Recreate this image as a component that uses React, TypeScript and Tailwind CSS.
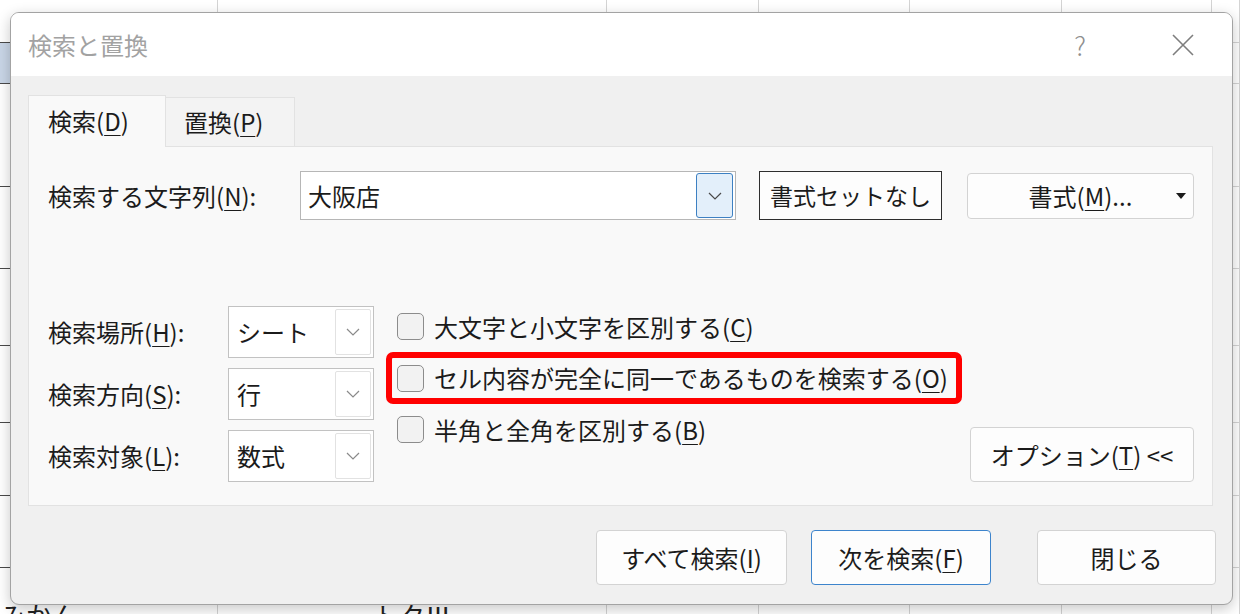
import React from "react";

const Key = ({ c }: { c: string }) => (
  <span className="underline decoration-1 underline-offset-[4px]">{c}</span>
);

const Chevron = ({ color = "#666" }: { color?: string }) => (
  <svg width="14" height="8" viewBox="0 0 14 8">
    <path d="M1 1l6 6 6-6" stroke={color} strokeWidth="1.2" fill="none" />
  </svg>
);

const sheetCols = [218, 389, 152, 151, 152, 150, 28];
const sheetRows = [43, 41, 103, 82, 77, 77, 73, 72, 80];

const Sheet = () => (
  <div className="flex flex-col w-[1240px] h-[614px] bg-white">
    {sheetRows.map((h, r) => (
      <div key={r} className="flex shrink-0" style={{ height: h }}>
        {sheetCols.map((w, c) => (
          <div
            key={c}
            style={{ width: w }}
            className={`shrink-0 border-r border-[#d4d4d4] ${
              c === 0 ? "border-b border-b-[#4a4a4a]" : "border-b border-b-[#d4d4d4]"
            } ${r === 1 && c === 0 ? "bg-[#c9d6e7]" : ""} ${
              r === 8 ? "pt-[34px] text-[26px] leading-none text-[#222]" : ""
            } ${r === 8 && c === 1 ? "text-center" : ""}`}
          >
            {r === 8 && c === 0 ? "みかん" : ""}
            {r === 8 && c === 1 ? "トクⅢ" : ""}
          </div>
        ))}
      </div>
    ))}
  </div>
);

const SelectBox = ({ value }: { value: string }) => (
  <div className="w-[146px] h-[52px] bg-white border border-[#c2c2c2] flex items-center pl-[8px] pr-[2px]">
    <span className="flex-1 text-[24px]">{value}</span>
    <div className="w-[36px] h-[46px] border border-[#e2e2e2] rounded-[2px] flex items-center justify-center">
      <Chevron color="#8a8a8a" />
    </div>
  </div>
);

const CheckRow = ({ children, marked }: { children: React.ReactNode; marked?: boolean }) => (
  <div
    className={`flex items-center border-[6px] rounded-[7px] pl-[5px] ${
      marked ? "h-[52px] w-[576px] border-[#ff0000]" : "h-[51px] border-transparent"
    }`}
  >
    <div className="w-[27px] h-[27px] rounded-[5px] border border-[#8c8c8c] bg-[#f2f2f2]" />
    <span className="ml-[10px] text-[24px]">{children}</span>
  </div>
);

const Button = ({
  children,
  className = "",
}: {
  children: React.ReactNode;
  className?: string;
}) => (
  <div
    className={`h-[55px] bg-[#fdfdfd] rounded-[4px] border flex items-center justify-center text-[24px] ${className}`}
  >
    {children}
  </div>
);

export default function App() {
  return (
    <div className="relative w-[1240px] h-[614px] overflow-hidden font-['Noto_Sans_CJK_JP','Noto_Sans',sans-serif] text-[#1b1b1b]">
      <Sheet />

      {/* dialog */}
      <div className="absolute left-[10px] top-[12px] w-[1223px] h-[593px] rounded-[9px] border border-[#a3a3a3] bg-[#f0f0f0] overflow-hidden shadow-[0_4px_14px_rgba(0,0,0,0.22)] flex flex-col">
        <div className="h-[63px] bg-white flex items-center pl-[17px] pr-[38px] shrink-0">
          <span className="text-[24px] text-[#a2a2a2]">検索と置換</span>
          <span className="ml-auto text-[26px] font-light text-[#8e8e8e] leading-none">?</span>
          <svg className="ml-[86px]" width="22" height="22" viewBox="0 0 22 22">
            <path d="M1 1l20 20M21 1L1 21" stroke="#7e7e7e" strokeWidth="1.6" />
          </svg>
        </div>

        <div className="flex-1 pl-[17px] pr-[16px] pt-[19px]">
          {/* tabs */}
          <div className="flex items-end h-[52px] -mb-px relative z-10">
            <div className="h-[52px] w-[138px] bg-[#f9f9f9] border border-b-0 border-[#e2e2e2] flex items-center pl-[19px] text-[24px] pb-[2px]">
              検索(<Key c="D" />)
            </div>
            <div className="h-[50px] w-[129px] bg-[#f3f3f3] border border-l-0 border-[#e2e2e2] flex items-center pl-[18px] text-[24px]">
              置換(<Key c="P" />)
            </div>
          </div>

          {/* panel */}
          <div className="w-[1185px] h-[360px] bg-[#f9f9f9] border border-[#e2e2e2] pl-[19px] pr-[18px] pt-[24px]">
            <div className="flex items-center h-[49px]">
              <div className="w-[252px] text-[24px]">
                検索する文字列(<Key c="N" />):
              </div>
              <div className="w-[436px] h-[49px] bg-white border border-[#b6b6b6] flex items-center pl-[7px] pr-[2px]">
                <span className="flex-1 text-[24px]">大阪店</span>
                <div className="w-[37px] h-[45px] bg-[#e3effa] border-[1.5px] border-[#3d80c2] rounded-[3px] flex items-center justify-center">
                  <Chevron color="#4a4a4a" />
                </div>
              </div>
              <div className="ml-[23px] w-[183px] h-[49px] border-[1.5px] border-[#2e2e2e] bg-[#fdfdfd] flex items-center justify-center text-[23px]">
                書式セットなし
              </div>
              <div className="ml-[25px] w-[227px] h-[46px] bg-[#fdfdfd] border border-[#d3d3d3] rounded-[4px] relative flex items-center justify-center text-[24px]">
                書式(<Key c="M" />)...
                <svg className="absolute right-[7px] top-[19px]" width="10" height="6" viewBox="0 0 10 6">
                  <path d="M0 0h10L5 6z" fill="#1b1b1b" />
                </svg>
              </div>
            </div>

            <div className="flex items-start mt-[81px]">
              <div className="flex flex-col gap-[10px] mt-[5px]">
                <div className="flex items-center">
                  <div className="w-[180px] text-[24px]">
                    検索場所(<Key c="H" />):
                  </div>
                  <SelectBox value="シート" />
                </div>
                <div className="flex items-center">
                  <div className="w-[180px] text-[24px]">
                    検索方向(<Key c="S" />):
                  </div>
                  <SelectBox value="行" />
                </div>
                <div className="flex items-center">
                  <div className="w-[180px] text-[24px]">
                    検索対象(<Key c="L" />):
                  </div>
                  <SelectBox value="数式" />
                </div>
              </div>

              <div className="flex flex-col ml-[12px]">
                <CheckRow>
                  大文字と小文字を区別する(<Key c="C" />)
                </CheckRow>
                <CheckRow marked>
                  セル内容が完全に同一であるものを検索する(<Key c="O" />)
                </CheckRow>
                <CheckRow>
                  半角と全角を区別する(<Key c="B" />)
                </CheckRow>
              </div>

              <Button className="ml-auto mt-[126px] w-[224px] border-[#d3d3d3]">
                オプション(<Key c="T" />) &lt;&lt;
              </Button>
            </div>
          </div>

          {/* bottom buttons */}
          <div className="flex justify-end mt-[24px]">
            <Button className="w-[191px] border-[#d3d3d3]">
              すべて検索(<Key c="I" />)
            </Button>
            <Button className="ml-[24px] w-[180px] border-[#3d84cc] border-[1.5px]">
              次を検索(<Key c="F" />)
            </Button>
            <Button className="ml-[46px] w-[179px] border-[#d3d3d3]">閉じる</Button>
          </div>
        </div>
      </div>
    </div>
  );
}
